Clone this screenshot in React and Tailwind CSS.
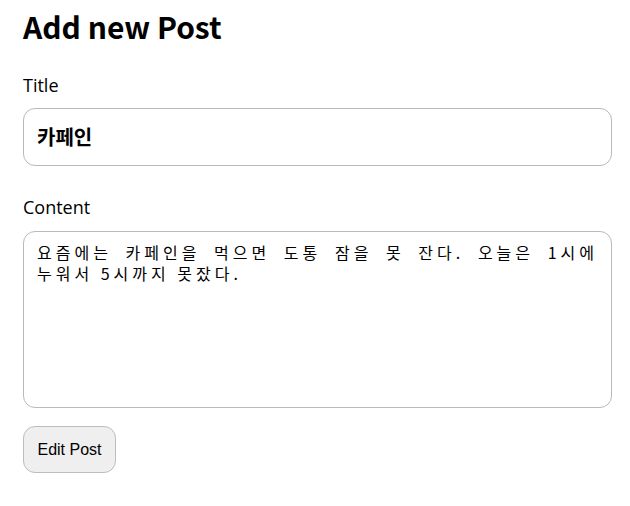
export default function App() {
  return (
    <div className="flex min-h-[506px] w-[630px] flex-col items-start bg-white px-[23px] pt-[8px] font-['Open_Sans','Noto_Sans_CJK_KR',sans-serif] text-black">
      <h1 className="m-0 font-['Noto_Sans_CJK_KR',sans-serif] text-[30px] font-bold leading-[36px]">Add new Post</h1>
      <label className="mt-[29px] text-[18px] leading-[24px]">Title</label>
      <div className="mt-[11px] flex h-[58px] w-[589px] items-center rounded-[12px] border border-[#b9b9b9] px-[13px]">
        <span className="font-['Noto_Sans_CJK_KR',sans-serif] text-[20px] font-bold leading-none">카페인</span>
      </div>
      <label className="mt-[29px] text-[18px] leading-[24px]">Content</label>
      <textarea
        readOnly
        className="mt-[12px] block h-[177px] w-[589px] resize-none rounded-[12px] border border-[#b9b9b9] px-[13px] pt-[10px] text-justify font-['Noto_Sans_CJK_KR',sans-serif] text-[16px] leading-[21px] tracking-[4px] break-keep outline-none"
        defaultValue="요즘에는 카페인을 먹으면 도통 잠을 못 잔다. 오늘은 1시에 누워서 5시까지 못잤다."
      />
      <button className="mt-[18px] flex h-[47px] w-[93px] items-center justify-center rounded-[12px] border border-[#bdbdbd] bg-[#efefef] font-['Liberation_Sans',Arial,sans-serif] text-[16px]">
        Edit Post
      </button>
    </div>
  );
}
